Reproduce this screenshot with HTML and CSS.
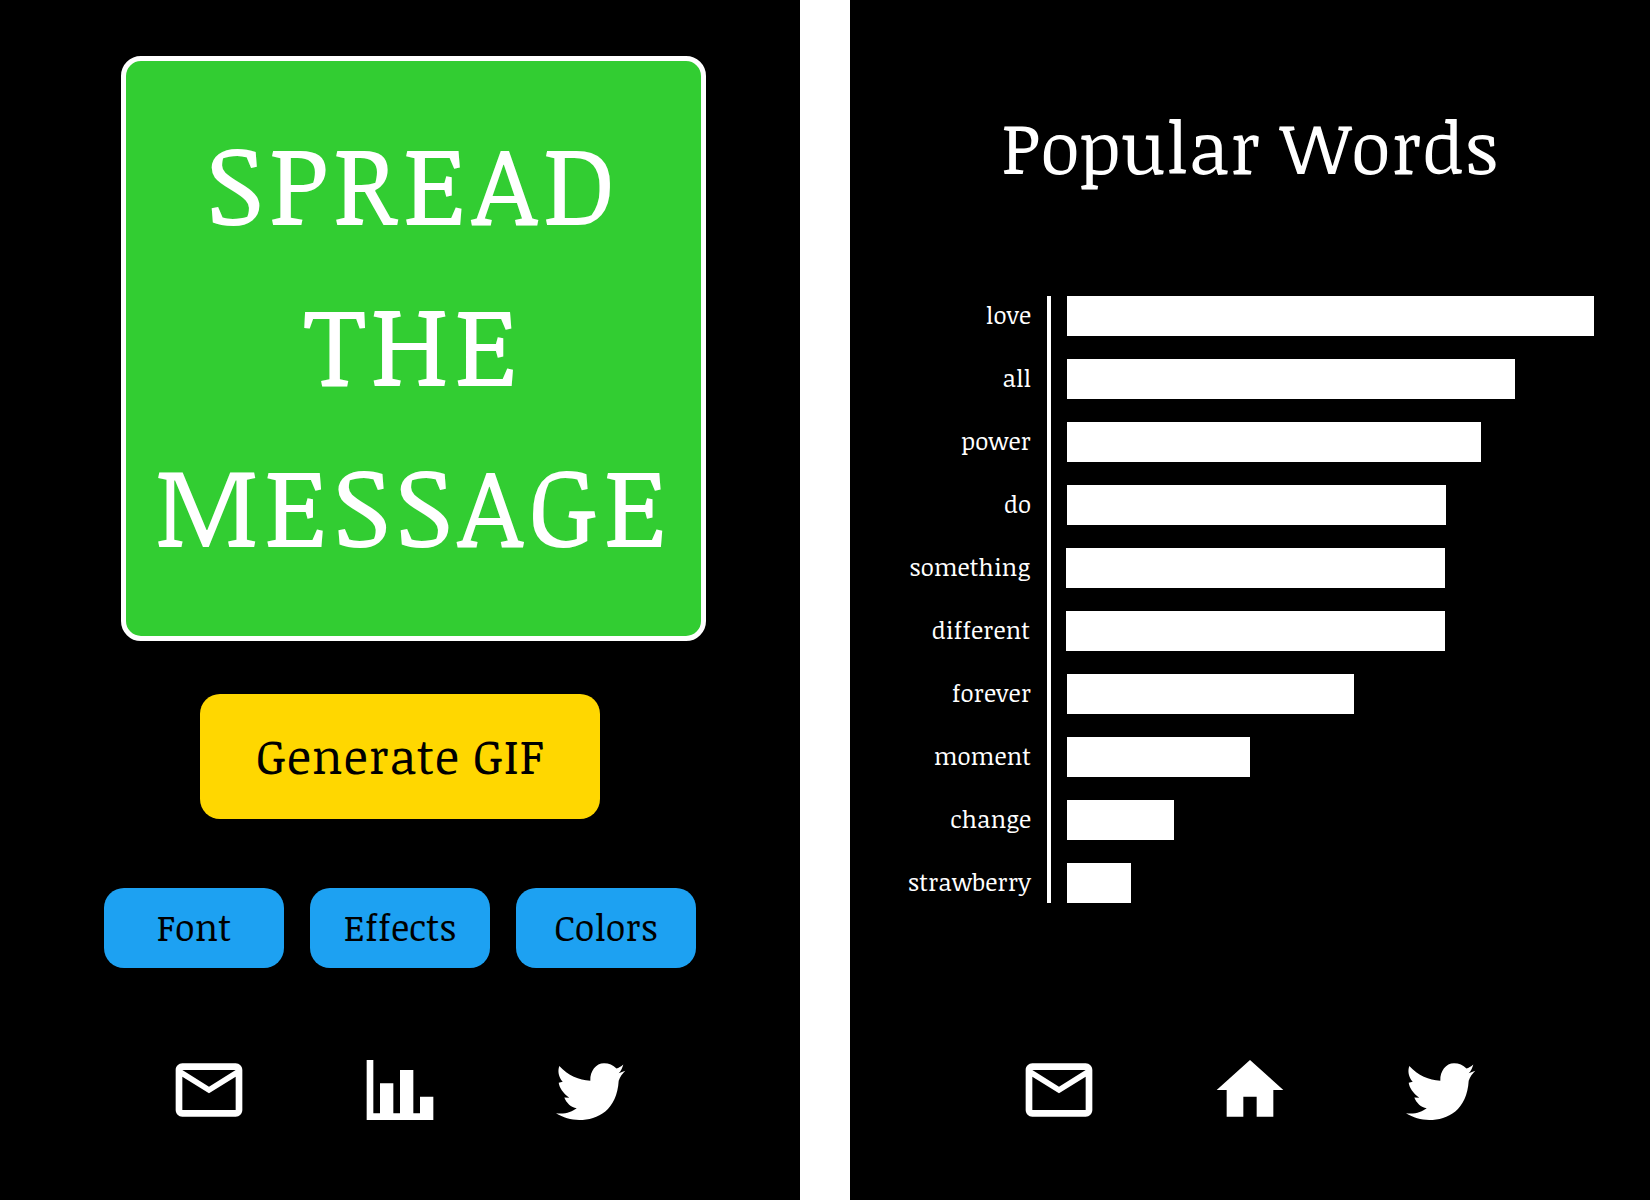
FILE: index.html
```html
<!DOCTYPE html>
<html lang="en">
<head>
<meta charset="utf-8">
<title>Spread the Message</title>
<link rel="stylesheet" href="styles.css">
</head>
<body>
<main class="screens">
  <section class="screen screen-left">
    <div class="message-card">
      <p class="message-line">SPREAD</p>
      <p class="message-line">THE</p>
      <p class="message-line">MESSAGE</p>
    </div>
    <button class="btn-generate">Generate GIF</button>
    <div class="options">
      <button class="btn-option">Font</button>
      <button class="btn-option">Effects</button>
      <button class="btn-option">Colors</button>
    </div>
    <nav class="icon-nav">
      <svg class="icon" viewBox="0 0 24 24"><path d="M22 6C22 4.9 21.1 4 20 4H4C2.9 4 2 4.9 2 6V18C2 19.1 2.9 20 4 20H20C21.1 20 22 19.1 22 18V6M20 6L12 11L4 6H20M20 18H4V8L12 13L20 8V18Z"/></svg>
      <svg class="icon" viewBox="0 0 24 24"><path d="M22 21H2V3H4V19H6V10H10V19H12V6H16V19H18V14H22V21Z"/></svg>
      <svg class="icon" viewBox="0 0 80 80"><path d="M72.3 14.5C70 16.5 67.5 18 65.5 18.5C62 15 58 13.3 53 13.3C45 13.3 39 21 39.3 30.7C28 30 17 25.5 8.3 16C6.5 21 7.5 27 11.7 31.7L7.7 32.7C8.5 38 12 43 18.3 47.7L13.3 47.5C15.5 53 20 57.5 25.7 58.3C21 62 14 64.5 5 63.3C12 67.5 20 70 28.3 70C47 70 66 60 67.7 30.7C69 26.7 71.5 23.5 74.3 20.7L67.7 23.3C70 21 71.5 17.5 72.3 14.5Z"/></svg>
    </nav>
  </section>
  <div class="divider"></div>
  <section class="screen screen-right">
    <h1 class="chart-title">Popular Words</h1>
    <div class="chart">
      <div class="words">
        <span class="word">love</span>
        <span class="word">all</span>
        <span class="word">power</span>
        <span class="word">do</span>
        <span class="word word-shift">something</span>
        <span class="word word-shift">different</span>
        <span class="word">forever</span>
        <span class="word">moment</span>
        <span class="word">change</span>
        <span class="word">strawberry</span>
      </div>
      <div class="bars">
        <span class="bar" style="width:527px"></span>
        <span class="bar" style="width:448px"></span>
        <span class="bar" style="width:414px"></span>
        <span class="bar" style="width:379px"></span>
        <span class="bar bar-shift" style="width:379px"></span>
        <span class="bar bar-shift" style="width:379px"></span>
        <span class="bar" style="width:287px"></span>
        <span class="bar" style="width:183px"></span>
        <span class="bar" style="width:107px"></span>
        <span class="bar" style="width:64px"></span>
      </div>
    </div>
    <nav class="icon-nav">
      <svg class="icon" viewBox="0 0 24 24"><path d="M22 6C22 4.9 21.1 4 20 4H4C2.9 4 2 4.9 2 6V18C2 19.1 2.9 20 4 20H20C21.1 20 22 19.1 22 18V6M20 6L12 11L4 6H20M20 18H4V8L12 13L20 8V18Z"/></svg>
      <svg class="icon" viewBox="0 0 24 24"><path d="M10 20V14H14V20H19V12H22L12 3L2 12H5V20Z"/></svg>
      <svg class="icon" viewBox="0 0 80 80"><path d="M72.3 14.5C70 16.5 67.5 18 65.5 18.5C62 15 58 13.3 53 13.3C45 13.3 39 21 39.3 30.7C28 30 17 25.5 8.3 16C6.5 21 7.5 27 11.7 31.7L7.7 32.7C8.5 38 12 43 18.3 47.7L13.3 47.5C15.5 53 20 57.5 25.7 58.3C21 62 14 64.5 5 63.3C12 67.5 20 70 28.3 70C47 70 66 60 67.7 30.7C69 26.7 71.5 23.5 74.3 20.7L67.7 23.3C70 21 71.5 17.5 72.3 14.5Z"/></svg>
    </nav>
  </section>
</main>
</body>
</html>
```

FILE: styles.css
```css
* { box-sizing: border-box; }
html, body { margin: 0; padding: 0; height: 100%; background: #fff; }
body { font-family: "Noticia Text", "Noto Serif", serif; color: #fff; font-kerning: none; }
.screens { display: flex; width: 1650px; height: 1200px; overflow: hidden; }
.screen { width: 800px; height: 1200px; background: #000; display: flex; flex-direction: column; align-items: center; }
.divider { width: 50px; background: #fff; }

.screen-left { padding-top: 56px; }
.message-card { width: 585px; height: 585px; margin-left: 26px; padding-bottom: 12px; background: #32cd32; border: 5px solid #fff; border-radius: 20px; display: flex; flex-direction: column; justify-content: center; align-items: center; }
.message-line { margin: 0; font-size: 112px; line-height: 161px; letter-spacing: 4px; white-space: nowrap; }
.btn-generate { width: 400px; height: 125px; margin-top: 53px; padding: 0 0 4px; border: 0; border-radius: 20px; background: #ffd700; color: #000; font: 48px "Noticia Text", "Noto Serif", serif; font-kerning: none; letter-spacing: 0.5px; }
.options { display: flex; gap: 26px; margin-top: 69px; }
.btn-option { width: 180px; height: 80px; padding: 0 0 4px; border: 0; border-radius: 20px; background: #1da1f2; color: #000; font: 36px "Noticia Text", "Noto Serif", serif; font-kerning: none; }

.icon-nav { display: flex; justify-content: center; margin-top: 82px; gap: 111px; }
.icon { display: block; width: 80px; height: 80px; fill: #fff; }

.chart-title { margin: 98px 0 0; font-size: 72px; font-weight: 400; line-height: 96px; letter-spacing: 0.35px; text-align: center; }
.chart { align-self: flex-start; display: flex; margin-top: 102px; }
.words { width: 201px; padding-right: 16px; border-right: 4px solid #fff; display: flex; flex-direction: column; gap: 23px; align-items: flex-end; }
.word { height: 40px; line-height: 38px; font-size: 24px; white-space: nowrap; }
.word-shift { margin-right: 1px; }
.bars { margin-left: 16px; display: flex; flex-direction: column; gap: 23px; }
.bar { display: block; height: 40px; background: #fff; }
.bar-shift { margin-left: -1px; }
.screen-right .icon-nav { margin-top: 147px; }
```
